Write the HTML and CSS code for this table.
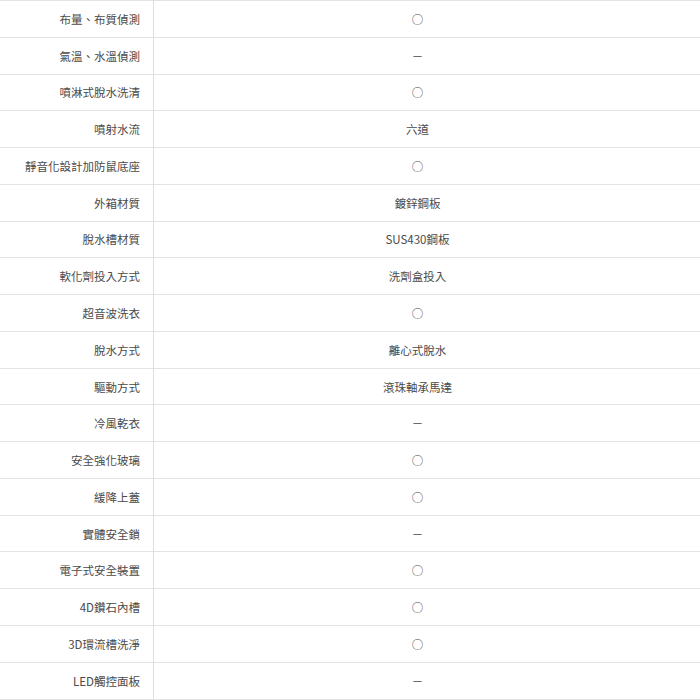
FILE: index.html
```html
<!DOCTYPE html>
<html lang="zh-Hant">
<head>
<meta charset="utf-8">
<link rel="stylesheet" href="styles.css">
</head>
<body>
<table class="spec">
<tbody>
<tr><th>布量、布質偵測</th><td>○</td></tr>
<tr><th>氣溫、水溫偵測</th><td>－</td></tr>
<tr><th>噴淋式脫水洗清</th><td>○</td></tr>
<tr><th>噴射水流</th><td>六道</td></tr>
<tr><th>靜音化設計加防鼠底座</th><td>○</td></tr>
<tr><th>外箱材質</th><td>鍍鋅鋼板</td></tr>
<tr><th>脫水槽材質</th><td>SUS430鋼板</td></tr>
<tr><th>軟化劑投入方式</th><td>洗劑盒投入</td></tr>
<tr><th>超音波洗衣</th><td>○</td></tr>
<tr><th>脫水方式</th><td>離心式脫水</td></tr>
<tr><th>驅動方式</th><td>滾珠軸承馬達</td></tr>
<tr><th>冷風乾衣</th><td>－</td></tr>
<tr><th>安全強化玻璃</th><td>○</td></tr>
<tr><th>緩降上蓋</th><td>○</td></tr>
<tr><th>實體安全鎖</th><td>－</td></tr>
<tr><th>電子式安全裝置</th><td>○</td></tr>
<tr><th>4D鑽石內槽</th><td>○</td></tr>
<tr><th>3D環流槽洗淨</th><td>○</td></tr>
<tr><th>LED觸控面板</th><td>－</td></tr>
</tbody>
</table>
</body>
</html>
```
FILE: styles.css
```css
html, body {
  margin: 0;
  padding: 0;
  background: #fff;
}
.spec {
  width: 700px;
  border-collapse: collapse;
  font-family: "Noto Sans CJK TC", "Noto Sans", sans-serif;
  font-size: 11.5px;
  color: #4a4a4a;
}
.spec tr {
  height: 36.78px;
  border-top: 1px solid #e3e3e3;
  border-bottom: 1px solid #e3e3e3;
}
.spec th {
  width: 140px;
  padding: 0 13px 0 0;
  text-align: right;
  font-weight: normal;
  border-right: 1px solid #dedede;
}
.spec td {
  padding: 0 19px 0 0;
  text-align: center;
}
```
